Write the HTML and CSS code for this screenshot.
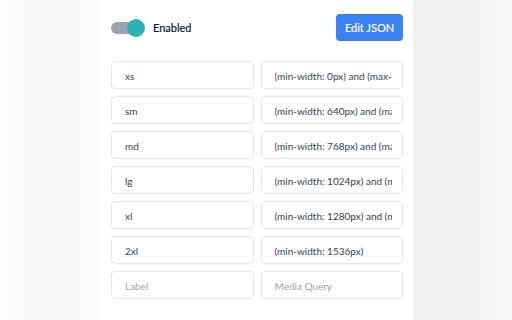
FILE: index.html
```html
<!DOCTYPE html>
<html>
<head>
<meta charset="utf-8">
<link rel="stylesheet" href="styles.css">
</head>
<body>
<div class="page">
  <div class="side side-left"></div>
  <main class="panel">
    <header class="header">
      <label class="toggle">
        <span class="track"><span class="knob"></span></span>
        <span class="toggle-label">Enabled</span>
      </label>
      <button class="btn">Edit JSON</button>
    </header>
    <div class="grid">
      <input class="field" value="xs">
      <input class="field" value="(min-width: 0px) and (max-width: 639px)">
      <input class="field" value="sm">
      <input class="field" value="(min-width: 640px) and (max-width: 767px)">
      <input class="field" value="md">
      <input class="field" value="(min-width: 768px) and (max-width: 1023px)">
      <input class="field" value="lg">
      <input class="field" value="(min-width: 1024px) and (max-width: 1279px)">
      <input class="field" value="xl">
      <input class="field" value="(min-width: 1280px) and (max-width: 1535px)">
      <input class="field" value="2xl">
      <input class="field" value="(min-width: 1536px)">
      <input class="field" placeholder="Label">
      <input class="field" placeholder="Media Query">
    </div>
  </main>
  <div class="side side-right"></div>
</div>
</body>
</html>
```

FILE: styles.css
```css
html, body {
  margin: 0;
  padding: 0;
  height: 100%;
}
body {
  font-family: Lato, "Noto Sans", sans-serif;
  background: #f8f8f8;
}
.page {
  display: flex;
  height: 320px;
  overflow: hidden;
}
.side-left {
  width: 100px;
  flex: none;
  background: linear-gradient(to right, #fcfcfc 0%, #f8f8f8 35%, #f9f9f9 80%, #fbfbfb 100%);
}
.side-right {
  flex: 1;
  background: linear-gradient(to right, #f1f1f1 0%, #f3f3f3 50%, #f8f8f8 100%);
}
.panel {
  width: 313px;
  flex: none;
  background: #ffffff;
  box-sizing: border-box;
  padding: 14px 10px 0 11px;
}
.header {
  display: flex;
  align-items: center;
  justify-content: space-between;
  height: 27px;
  margin-bottom: 20px;
}
.toggle {
  display: flex;
  align-items: center;
}
.track {
  position: relative;
  width: 30px;
  height: 12px;
  border-radius: 6px;
  background: #9ca3af;
  margin-right: 12px;
}
.knob {
  position: absolute;
  left: 16px;
  top: -3px;
  width: 18px;
  height: 18px;
  border-radius: 50%;
  background: #2bb3b3;
}
.toggle-label {
  font-size: 11px;
  font-weight: 400;
  color: #111827;
  -webkit-text-stroke: 0.2px #111827;
}
.btn {
  width: 67px;
  height: 27px;
  border: none;
  border-radius: 4px;
  background: #3b82f6;
  color: #ffffff;
  font-family: inherit;
  font-size: 11px;
  font-weight: 400;
  -webkit-text-stroke: 0.2px #ffffff;
  padding: 0;
}
.grid {
  display: grid;
  grid-template-columns: 1fr 1fr;
  column-gap: 7px;
  row-gap: 7px;
}
.field {
  box-sizing: border-box;
  width: 100%;
  min-width: 0;
  height: 28px;
  border: 1px solid #e5e7eb;
  border-radius: 4px;
  padding: 1px 10px 0 13px;
  font-family: inherit;
  font-size: 10px;
  color: #374151;
  background: #ffffff;
  outline: none;
}
.field::placeholder {
  color: #9ca3af;
}
```
